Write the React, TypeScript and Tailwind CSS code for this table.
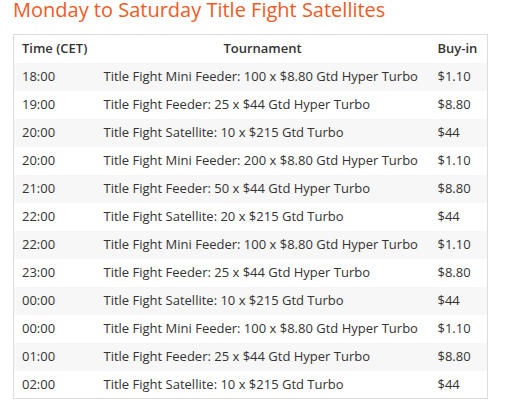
const rows = [
  ['18:00', 'Title Fight Mini Feeder: 100 x $8.80 Gtd Hyper Turbo', '$1.10'],
  ['19:00', 'Title Fight Feeder: 25 x $44 Gtd Hyper Turbo', '$8.80'],
  ['20:00', 'Title Fight Satellite: 10 x $215 Gtd Turbo', '$44'],
  ['20:00', 'Title Fight Mini Feeder: 200 x $8.80 Gtd Hyper Turbo', '$1.10'],
  ['21:00', 'Title Fight Feeder: 50 x $44 Gtd Hyper Turbo', '$8.80'],
  ['22:00', 'Title Fight Satellite: 20 x $215 Gtd Turbo', '$44'],
  ['22:00', 'Title Fight Mini Feeder: 100 x $8.80 Gtd Hyper Turbo', '$1.10'],
  ['23:00', 'Title Fight Feeder: 25 x $44 Gtd Hyper Turbo', '$8.80'],
  ['00:00', 'Title Fight Satellite: 10 x $215 Gtd Turbo', '$44'],
  ['00:00', 'Title Fight Mini Feeder: 100 x $8.80 Gtd Hyper Turbo', '$1.10'],
  ['01:00', 'Title Fight Feeder: 25 x $44 Gtd Hyper Turbo', '$8.80'],
  ['02:00', 'Title Fight Satellite: 10 x $215 Gtd Turbo', '$44'],
];

export default function App() {
  return (
    <div className="w-[513px] h-[405px] bg-white px-[13px] font-['Open_Sans',sans-serif] text-[#333]">
      {/* Heading */}
      <h2 className="text-[20px] leading-[20px] text-[#f15a24]">Monday to Saturday Title Fight Satellites</h2>

      {/* Schedule table */}
      <table className="mt-[14px] w-[475px] border border-[#dddddd] border-collapse text-[13px] table-fixed">
        <thead>
          <tr className="h-[28px]">
            <th className="w-[82px] pl-[8px] text-left font-semibold">Time (CET)</th>
            <th className="w-[334px] text-center font-semibold">Tournament</th>
            <th className="pl-[8px] text-left font-semibold">Buy-in</th>
          </tr>
        </thead>
        <tbody>
          {rows.map((r, i) => (
            <tr key={i} className={i % 2 === 0 ? 'h-[28px] bg-[#f7f7f7]' : 'h-[28px] bg-white'}>
              <td className="pl-[8px]">{r[0]}</td>
              <td className="pl-[8px]">{r[1]}</td>
              <td className="pl-[8px]">{r[2]}</td>
            </tr>
          ))}
        </tbody>
      </table>
    </div>
  );
}
